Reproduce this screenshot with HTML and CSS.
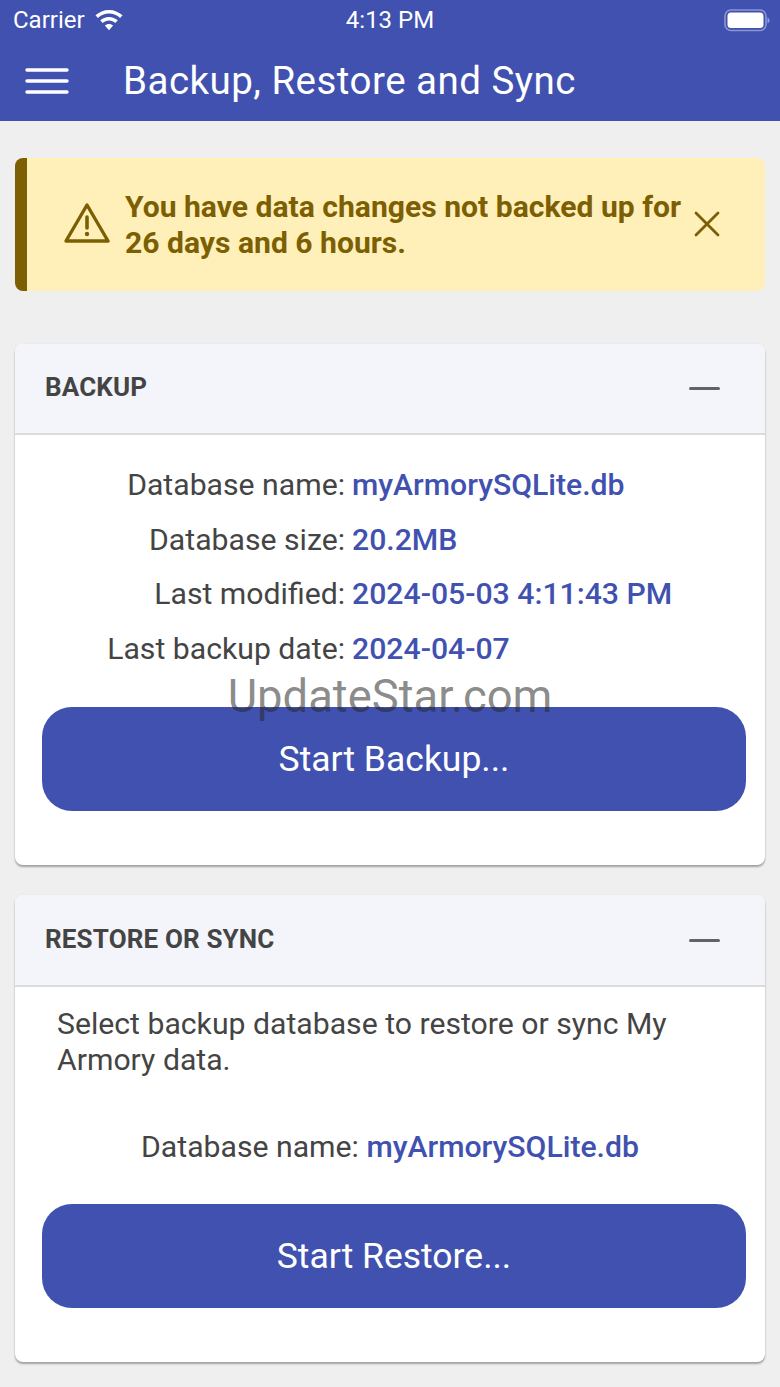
FILE: index.html
```html
<!DOCTYPE html>
<html lang="en">
<head>
<meta charset="utf-8">
<title>Backup, Restore and Sync</title>
<link rel="stylesheet" href="styles.css">
</head>
<body>
<header class="topbar">
  <div class="status">
    <div class="status-left">
      <span>Carrier</span>
      <svg class="wifi" width="28" height="22" viewBox="2.500 1.500 23 18"><path d="M14 2.200c4.300 0 8.200 1.700 11.100 4.400l-2 2.200C20.700 6.600 17.500 5.200 14 5.200S7.300 6.600 4.900 8.800l-2-2.200C5.800 3.900 9.700 2.200 14 2.200z M14 8c2.800 0 5.300 1 7.200 2.800l-2 2.200C17.800 11.800 16 11 14 11s-3.800.8-5.200 2l-2-2.200C8.700 9 11.200 8 14 8z M14 13.800c1.300 0 2.500.5 3.400 1.300L14 18.900l-3.400-3.800c.9-.8 2.100-1.300 3.400-1.300z" fill="#fff"/></svg>
    </div>
    <span class="clock">4:13 PM</span>
    <svg class="battery" width="47" height="23" viewBox="0 0 47 23"><rect x="1" y="1" width="41" height="20.500" rx="6" fill="none" stroke="#fff" stroke-opacity=".4" stroke-width="1.600"/><rect x="3.500" y="3.500" width="36" height="15.500" rx="3.500" fill="#fff"/><path d="M43.500 8.500v6c1.200-.5 2-1.600 2-3s-.8-2.500-2-3z" fill="#fff" fill-opacity=".45"/></svg>
  </div>
  <div class="nav">
    <svg class="menu" width="44" height="26" viewBox="0 0 44 26"><path d="M2 2h40M2 13h40M2 24h40" stroke="#fff" stroke-width="3.400" stroke-linecap="round"/></svg>
    <h1>Backup, Restore and Sync</h1>
  </div>
</header>
<main class="content">
  <section class="alert">
    <svg class="warn" width="46" height="42" viewBox="0 0 46 42"><path d="M23 3 L44 39 H2 Z" fill="none" stroke="#7d5f03" stroke-width="3.400" stroke-linejoin="round"/><path d="M23 15v11" stroke="#7d5f03" stroke-width="3.600" stroke-linecap="round"/><circle cx="23" cy="32" r="2.200" fill="#7d5f03"/></svg>
    <p>You have data changes not backed up for 26 days and 6 hours.</p>
    <svg class="close" width="26" height="26" viewBox="0 0 26 26"><path d="M2 2l22 22M24 2L2 24" stroke="#7d5f03" stroke-width="2.800" stroke-linecap="round"/></svg>
  </section>
  <section class="card backup">
    <div class="card-head"><h2>BACKUP</h2><span class="dash"></span></div>
    <div class="card-body">
      <dl class="rows">
        <dt>Database name:</dt><dd>myArmorySQLite.db</dd>
        <dt>Database size:</dt><dd>20.2MB</dd>
        <dt>Last modified:</dt><dd>2024-05-03 4:11:43 PM</dd>
        <dt>Last backup date:</dt><dd>2024-04-07</dd>
      </dl>
      <button class="action">Start Backup...</button>
    </div>
  </section>
  <section class="card restore">
    <div class="card-head"><h2>RESTORE OR SYNC</h2><span class="dash"></span></div>
    <div class="card-body">
      <p class="intro">Select backup database to restore or sync My Armory data.</p>
      <p class="single"><span>Database name:</span> <b>myArmorySQLite.db</b></p>
      <button class="action">Start Restore...</button>
    </div>
  </section>
</main>
<div class="watermark">UpdateStar.com</div>
</body>
</html>
```
FILE: styles.css
```css
* { box-sizing: border-box; }
html, body { margin: 0; height: 100%; }
body {
  width: 780px;
  min-height: 1387px;
  background: #efefef;
  font-family: Roboto, sans-serif;
  color: #444;
  position: relative;
  overflow: hidden;
}
.topbar { background: #4051b0; height: 121px; color: #fff; }
.status {
  height: 40px;
  display: flex;
  align-items: center;
  justify-content: space-between;
  padding: 0 9px 0 13px;
  font-size: 24px;
  position: relative;
}
.status-left { display: flex; align-items: center; gap: 10px; }
.clock { position: absolute; left: 0; right: 0; text-align: center; }
.battery { position: relative; }
.nav { display: flex; align-items: center; height: 81px; padding-left: 25px; }
.menu { margin-right: 54px; width: 44px; }
.nav h1 { margin: 0; font-size: 38.500px; font-weight: 400; letter-spacing: .48px; }
.content { padding: 37px 15px 0; }
.alert {
  height: 133px;
  background: #ffefb8;
  border-left: 12px solid #7d5f03;
  border-radius: 8px;
  display: flex;
  align-items: center;
  padding: 0 44px 0 37px;
  color: #7d5f03;
}
.warn { flex: none; margin: 0 15px 4px 0; }
.alert p { margin: 0; font-size: 30.100px; font-weight: 700; line-height: 36px; flex: 1; }
.close { flex: none; margin: 0 1px 2px 0; }
.card {
  background: #fff;
  border-radius: 8px;
  box-shadow: 0 2px 2px rgba(0,0,0,.32), 0 0 2px rgba(0,0,0,.06);
}
.backup { margin-top: 53px; height: 521px; }
.restore { margin-top: 30px; height: 467px; }
.card-head {
  height: 91px;
  background: #f3f5fa;
  border-bottom: 2px solid #dcdcdc;
  border-radius: 8px 8px 0 0;
  display: flex;
  align-items: center;
  justify-content: space-between;
  padding: 0 45px 0 30px;
}
.restore .card-head { height: 92px; }
.card-head h2 { margin: 0 0 4px; font-size: 26px; font-weight: 700; color: #444; letter-spacing: .15px; }
.restore h2 { margin-bottom: 2px; }
.dash { width: 31px; height: 3px; border-radius: 2px; background: #5f6368; }
.card-body { padding: 0 19px 0 27px; font-size: 30.200px; }
.rows {
  margin: 0;
  padding-top: 23px;
  display: grid;
  grid-template-columns: 303px 1fr;
  column-gap: 7px;
  row-gap: 0;
  line-height: 54.500px;
}
.rows dt { text-align: right; }
.rows dd { margin: 0; color: #4051b0; font-weight: 500; }
.action {
  display: block;
  width: 100%;
  height: 104px;
  border: 0;
  border-radius: 30px;
  background: #4051b0;
  color: #fff;
  font: 400 35.500px Roboto, sans-serif;
}
.backup .action { margin-top: 31px; }
.intro { margin: 19px 0 0 15px; line-height: 36px; color: #444; }
.single { margin: 51px 8px 0 0; text-align: center; line-height: 36px; }
.single b { color: #4051b0; font-weight: 500; }
.restore .action { margin-top: 39px; }
.watermark {
  position: absolute;
  left: 0;
  right: 0;
  top: 672px;
  text-align: center;
  font-size: 45.400px;
  line-height: 50px;
  color: rgba(40,40,40,.55);
  pointer-events: none;
}
```
